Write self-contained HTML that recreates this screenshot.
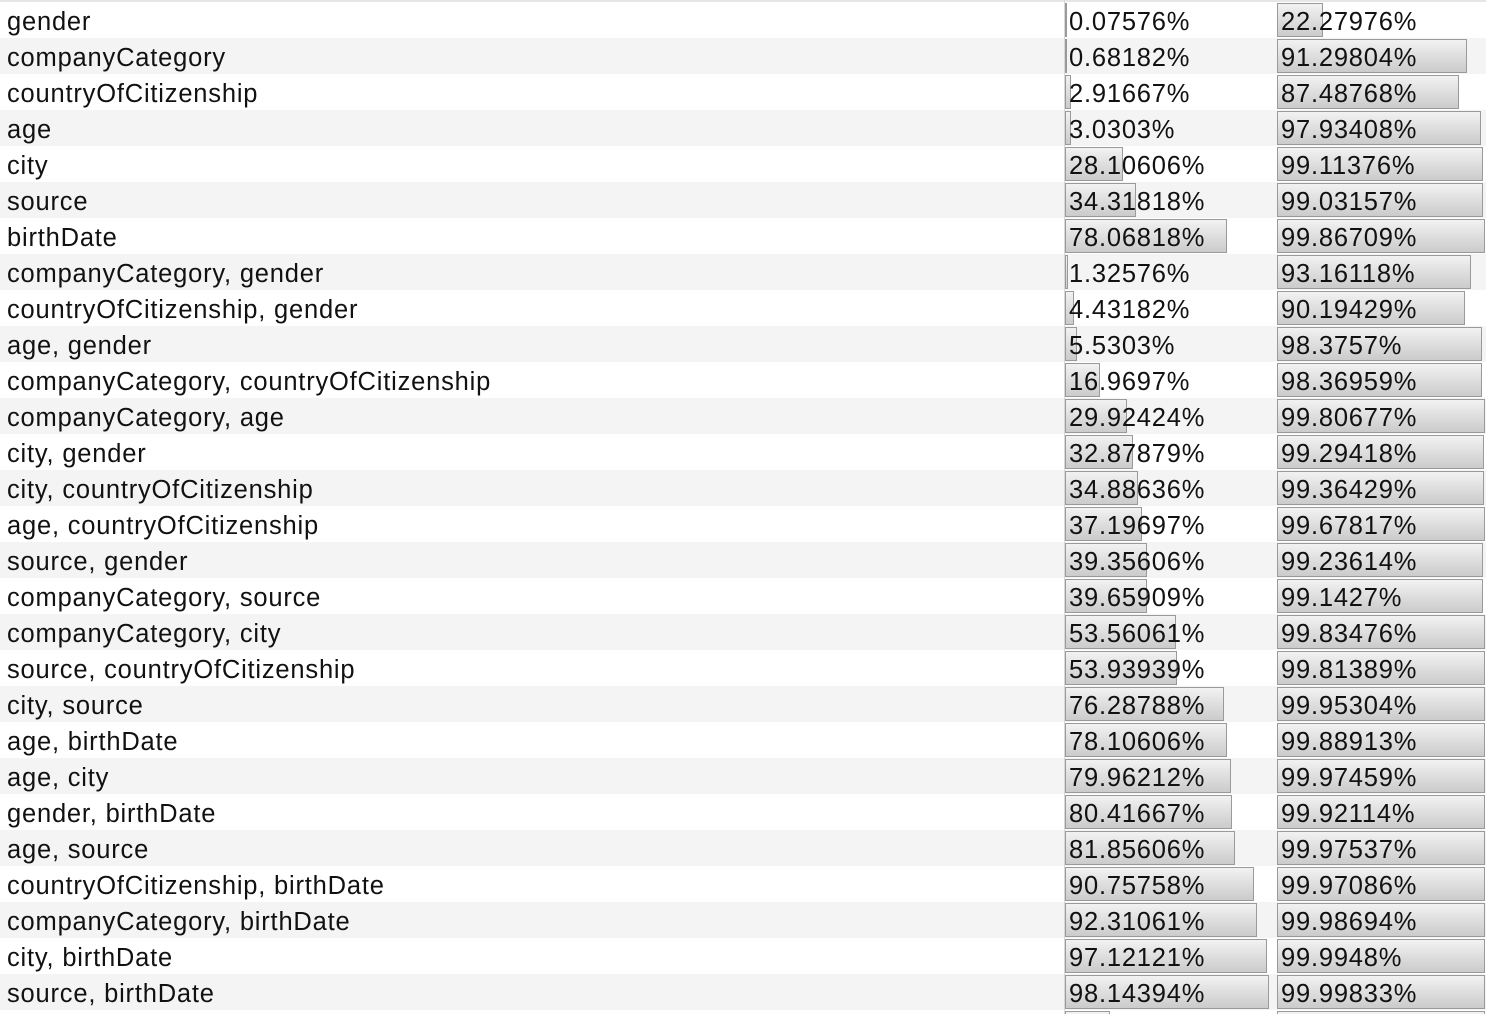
<!DOCTYPE html>
<html><head><meta charset="utf-8"><style>
html,body{margin:0;padding:0;width:1486px;height:1014px;overflow:hidden;background:#fff;font-family:"Liberation Sans",Helvetica,Arial,sans-serif;}
.top{height:2px;background:#e6e6e6;}
.r{position:relative;height:36px;}
.l{position:absolute;left:7px;top:2px;line-height:36px;font-size:25.5px;letter-spacing:0.8px;color:#111;white-space:nowrap;}
.b{position:absolute;top:1px;height:34px;box-sizing:border-box;border:1.5px solid #9a9a9a;background:linear-gradient(#f2f2f2,#cbcbcb);}
.c1{left:1065px;}.c2{left:1277px;}
.t{position:absolute;top:2px;line-height:36px;font-size:25.5px;letter-spacing:0.8px;color:#111;white-space:nowrap;}
.t1{left:1069px;}.t2{left:1281px;}
.vl{position:absolute;top:0;width:1px;height:1014px;background:#ddd;}
</style></head><body>
<div class="top"></div>
<div id="w">
<div class="r" style="background:#fff"><span class="l">gender</span><div class="b c1" style="width:2px"></div><span class="t t1">0.07576%</span><div class="b c2" style="width:46px"></div><span class="t t2">22.27976%</span></div>
<div class="r" style="background:#f4f4f4"><span class="l">companyCategory</span><div class="b c1" style="width:2px"></div><span class="t t1">0.68182%</span><div class="b c2" style="width:190px"></div><span class="t t2">91.29804%</span></div>
<div class="r" style="background:#fff"><span class="l">countryOfCitizenship</span><div class="b c1" style="width:6px"></div><span class="t t1">2.91667%</span><div class="b c2" style="width:182px"></div><span class="t t2">87.48768%</span></div>
<div class="r" style="background:#f4f4f4"><span class="l">age</span><div class="b c1" style="width:6px"></div><span class="t t1">3.0303%</span><div class="b c2" style="width:204px"></div><span class="t t2">97.93408%</span></div>
<div class="r" style="background:#fff"><span class="l">city</span><div class="b c1" style="width:58px"></div><span class="t t1">28.10606%</span><div class="b c2" style="width:206px"></div><span class="t t2">99.11376%</span></div>
<div class="r" style="background:#f4f4f4"><span class="l">source</span><div class="b c1" style="width:71px"></div><span class="t t1">34.31818%</span><div class="b c2" style="width:206px"></div><span class="t t2">99.03157%</span></div>
<div class="r" style="background:#fff"><span class="l">birthDate</span><div class="b c1" style="width:162px"></div><span class="t t1">78.06818%</span><div class="b c2" style="width:208px"></div><span class="t t2">99.86709%</span></div>
<div class="r" style="background:#f4f4f4"><span class="l">companyCategory, gender</span><div class="b c1" style="width:3px"></div><span class="t t1">1.32576%</span><div class="b c2" style="width:194px"></div><span class="t t2">93.16118%</span></div>
<div class="r" style="background:#fff"><span class="l">countryOfCitizenship, gender</span><div class="b c1" style="width:9px"></div><span class="t t1">4.43182%</span><div class="b c2" style="width:188px"></div><span class="t t2">90.19429%</span></div>
<div class="r" style="background:#f4f4f4"><span class="l">age, gender</span><div class="b c1" style="width:12px"></div><span class="t t1">5.5303%</span><div class="b c2" style="width:205px"></div><span class="t t2">98.3757%</span></div>
<div class="r" style="background:#fff"><span class="l">companyCategory, countryOfCitizenship</span><div class="b c1" style="width:35px"></div><span class="t t1">16.9697%</span><div class="b c2" style="width:205px"></div><span class="t t2">98.36959%</span></div>
<div class="r" style="background:#f4f4f4"><span class="l">companyCategory, age</span><div class="b c1" style="width:62px"></div><span class="t t1">29.92424%</span><div class="b c2" style="width:208px"></div><span class="t t2">99.80677%</span></div>
<div class="r" style="background:#fff"><span class="l">city, gender</span><div class="b c1" style="width:68px"></div><span class="t t1">32.87879%</span><div class="b c2" style="width:207px"></div><span class="t t2">99.29418%</span></div>
<div class="r" style="background:#f4f4f4"><span class="l">city, countryOfCitizenship</span><div class="b c1" style="width:73px"></div><span class="t t1">34.88636%</span><div class="b c2" style="width:207px"></div><span class="t t2">99.36429%</span></div>
<div class="r" style="background:#fff"><span class="l">age, countryOfCitizenship</span><div class="b c1" style="width:77px"></div><span class="t t1">37.19697%</span><div class="b c2" style="width:208px"></div><span class="t t2">99.67817%</span></div>
<div class="r" style="background:#f4f4f4"><span class="l">source, gender</span><div class="b c1" style="width:82px"></div><span class="t t1">39.35606%</span><div class="b c2" style="width:206px"></div><span class="t t2">99.23614%</span></div>
<div class="r" style="background:#fff"><span class="l">companyCategory, source</span><div class="b c1" style="width:82px"></div><span class="t t1">39.65909%</span><div class="b c2" style="width:206px"></div><span class="t t2">99.1427%</span></div>
<div class="r" style="background:#f4f4f4"><span class="l">companyCategory, city</span><div class="b c1" style="width:111px"></div><span class="t t1">53.56061%</span><div class="b c2" style="width:208px"></div><span class="t t2">99.83476%</span></div>
<div class="r" style="background:#fff"><span class="l">source, countryOfCitizenship</span><div class="b c1" style="width:112px"></div><span class="t t1">53.93939%</span><div class="b c2" style="width:208px"></div><span class="t t2">99.81389%</span></div>
<div class="r" style="background:#f4f4f4"><span class="l">city, source</span><div class="b c1" style="width:159px"></div><span class="t t1">76.28788%</span><div class="b c2" style="width:208px"></div><span class="t t2">99.95304%</span></div>
<div class="r" style="background:#fff"><span class="l">age, birthDate</span><div class="b c1" style="width:162px"></div><span class="t t1">78.10606%</span><div class="b c2" style="width:208px"></div><span class="t t2">99.88913%</span></div>
<div class="r" style="background:#f4f4f4"><span class="l">age, city</span><div class="b c1" style="width:166px"></div><span class="t t1">79.96212%</span><div class="b c2" style="width:208px"></div><span class="t t2">99.97459%</span></div>
<div class="r" style="background:#fff"><span class="l">gender, birthDate</span><div class="b c1" style="width:167px"></div><span class="t t1">80.41667%</span><div class="b c2" style="width:208px"></div><span class="t t2">99.92114%</span></div>
<div class="r" style="background:#f4f4f4"><span class="l">age, source</span><div class="b c1" style="width:170px"></div><span class="t t1">81.85606%</span><div class="b c2" style="width:208px"></div><span class="t t2">99.97537%</span></div>
<div class="r" style="background:#fff"><span class="l">countryOfCitizenship, birthDate</span><div class="b c1" style="width:189px"></div><span class="t t1">90.75758%</span><div class="b c2" style="width:208px"></div><span class="t t2">99.97086%</span></div>
<div class="r" style="background:#f4f4f4"><span class="l">companyCategory, birthDate</span><div class="b c1" style="width:192px"></div><span class="t t1">92.31061%</span><div class="b c2" style="width:208px"></div><span class="t t2">99.98694%</span></div>
<div class="r" style="background:#fff"><span class="l">city, birthDate</span><div class="b c1" style="width:202px"></div><span class="t t1">97.12121%</span><div class="b c2" style="width:208px"></div><span class="t t2">99.9948%</span></div>
<div class="r" style="background:#f4f4f4"><span class="l">source, birthDate</span><div class="b c1" style="width:204px"></div><span class="t t1">98.14394%</span><div class="b c2" style="width:208px"></div><span class="t t2">99.99833%</span></div>
<div class="r" style="background:#fff"><div class="b c1" style="width:45px"></div><div class="b c2" style="width:208px"></div></div>
</div>
<div class="vl" style="left:1064px;background:#d8d8d8"></div>
</body></html>
